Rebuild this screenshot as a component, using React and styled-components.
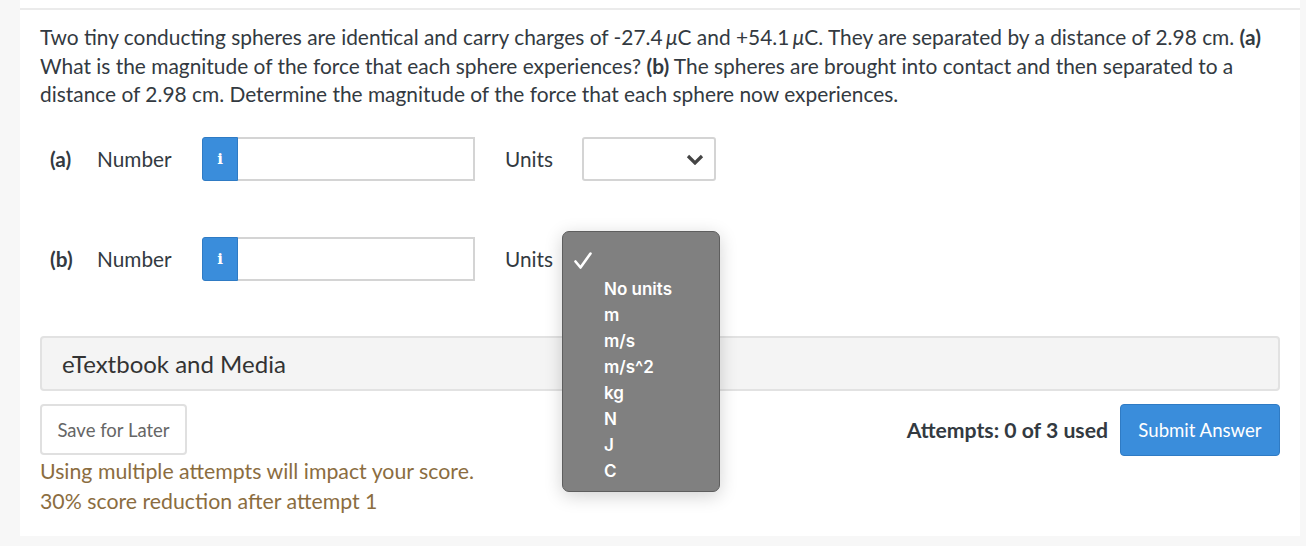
import React from 'react';
import styled, { createGlobalStyle } from 'styled-components';

const GlobalStyle = createGlobalStyle`
  body {
    margin: 0;
    background: #f7f7f7;
    font-family: Lato, "Open Sans", sans-serif;
    color: #333a41;
  }
`;

const Page = styled.div`
  width: 1280px;
  margin-left: 20px;
  background: #fff;
  min-height: 536px;
  position: relative;
`;

const TopRule = styled.div`
  height: 8px;
  border-bottom: 2px solid #ebebeb;
`;

const Body = styled.div`
  padding: 13px 20px 20px 20px;
`;

const Question = styled.p`
  margin: 0;
  font-size: 20.9px;
  line-height: 28.5px;
  color: #333a41;
  b { font-weight: 700; }
`;

const Micro = styled.i`
  font-style: italic;
  margin-left: -2px;
`;

const Row = styled.div`
  display: flex;
  align-items: center;
  height: 44px;
  margin-top: ${p => p.$top}px;
  padding-left: 10px;
  font-size: 20.8px;
  position: relative;
`;

const Part = styled.span`
  font-weight: 700;
  width: 47px;
`;

const Label = styled.span`
  width: 105px;
`;

const InfoBtn = styled.div`
  width: 36px;
  height: 44px;
  box-sizing: border-box;
  background: #3a8ddb;
  border: 1px solid #2f7bc4;
  border-radius: 3px 0 0 3px;
  color: #fff;
  display: flex;
  align-items: center;
  justify-content: center;
  font-family: "DejaVu Serif", serif;
  font-weight: 700;
  font-size: 15px;
`;

const NumInput = styled.div`
  width: 237px;
  height: 44px;
  box-sizing: border-box;
  border: 2px solid #d4d4d4;
  border-left: none;
`;

const UnitsLabel = styled.span`
  margin-left: 30px;
  width: 77px;
`;

const Select = styled.div`
  width: 134px;
  height: 44px;
  box-sizing: border-box;
  border: 2px solid #d4d4d4;
  border-radius: 3px;
  display: flex;
  align-items: center;
  justify-content: flex-end;
  padding-right: 10px;
`;

const Popup = styled.div`
  position: absolute;
  left: 522px;
  top: -6px;
  width: 158px;
  height: 261px;
  box-sizing: border-box;
  background: #808080;
  border: 1px solid #5e5e5e;
  border-radius: 7px;
  box-shadow: 0 4px 18px rgba(0, 0, 0, 0.18);
  font-family: Inter, "Liberation Sans", sans-serif;
  font-weight: 600;
  color: #fff;
  padding: 14px 0 0 0;
  z-index: 2;
`;

const Check = styled.div`
  height: 30px;
  padding-left: 10px;
  display: flex;
  align-items: center;
`;

const Option = styled.div`
  padding-left: 41px;
  font-size: 17px;
  line-height: 26px;
  height: 26px;
`;

const MediaBar = styled.div`
  margin-top: 55px;
  height: 55px;
  box-sizing: border-box;
  background: #f4f4f4;
  border: 2px solid #e2e2e2;
  border-radius: 4px;
  display: flex;
  align-items: center;
  padding-left: 20px;
  font-size: 24px;
  color: #333;
`;

const Actions = styled.div`
  display: flex;
  align-items: center;
  margin-top: 13px;
`;

const SaveBtn = styled.div`
  width: 147px;
  height: 51px;
  box-sizing: border-box;
  border: 2px solid #e0e0e0;
  border-radius: 4px;
  display: flex;
  align-items: center;
  justify-content: center;
  font-size: 18.5px;
  color: #666;
`;

const Attempts = styled.span`
  margin-left: auto;
  font-weight: 700;
  font-size: 21.2px;
  margin-right: 12px;
`;

const SubmitBtn = styled.div`
  width: 160px;
  height: 52px;
  box-sizing: border-box;
  background: #3a8ddb;
  border: 1px solid #2f7bc4;
  border-radius: 4px;
  color: #fff;
  font-size: 18.6px;
  display: flex;
  align-items: center;
  justify-content: center;
`;

const Note = styled.div`
  color: #8b6d3f;
  font-size: 21.3px;
  line-height: 30px;
`;

const Chevron = () => (
  <svg width="18" height="12" viewBox="0 0 18 12">
    <path d="M2 3l7 7 7-7" fill="none" stroke="#444" strokeWidth="3.2" />
  </svg>
);

const CheckMark = () => (
  <svg width="20" height="20" viewBox="0 0 20 20">
    <path d="M2.5 10.5l5 6L17.5 2.5" fill="none" stroke="#fff" strokeWidth="2.6" strokeLinecap="round" strokeLinejoin="round" />
  </svg>
);

const units = ['No units', 'm', 'm/s', 'm/s^2', 'kg', 'N', 'J', 'C'];

const AnswerRow = ({ part, top, children }) => (
  <Row $top={top}>
    <Part>({part})</Part>
    <Label>Number</Label>
    <InfoBtn>i</InfoBtn>
    <NumInput />
    <UnitsLabel>Units</UnitsLabel>
    {children}
  </Row>
);

export default function App() {
  return (
    <>
      <GlobalStyle />
      <Page>
        <TopRule />
        <Body>
          <Question>
            Two tiny conducting spheres are identical and carry charges of -27.4 <Micro>μ</Micro>C and +54.1 <Micro>μ</Micro>C. They are separated by a distance of 2.98 cm. <b>(a)</b> What is the magnitude of the force that each sphere experiences? <b>(b)</b> The spheres are brought into contact and then separated to a distance of 2.98 cm. Determine the magnitude of the force that each sphere now experiences.
          </Question>
          <AnswerRow part="a" top={28}>
            <Select><Chevron /></Select>
          </AnswerRow>
          <AnswerRow part="b" top={56}>
            <Popup>
              <Check><CheckMark /></Check>
              {units.map(u => <Option key={u}>{u}</Option>)}
            </Popup>
          </AnswerRow>
          <MediaBar>eTextbook and Media</MediaBar>
          <Actions>
            <SaveBtn>Save for Later</SaveBtn>
            <Attempts>Attempts: 0 of 3 used</Attempts>
            <SubmitBtn>Submit Answer</SubmitBtn>
          </Actions>
          <Note>
            Using multiple attempts will impact your score.<br />
            30% score reduction after attempt 1
          </Note>
        </Body>
      </Page>
    </>
  );
}
